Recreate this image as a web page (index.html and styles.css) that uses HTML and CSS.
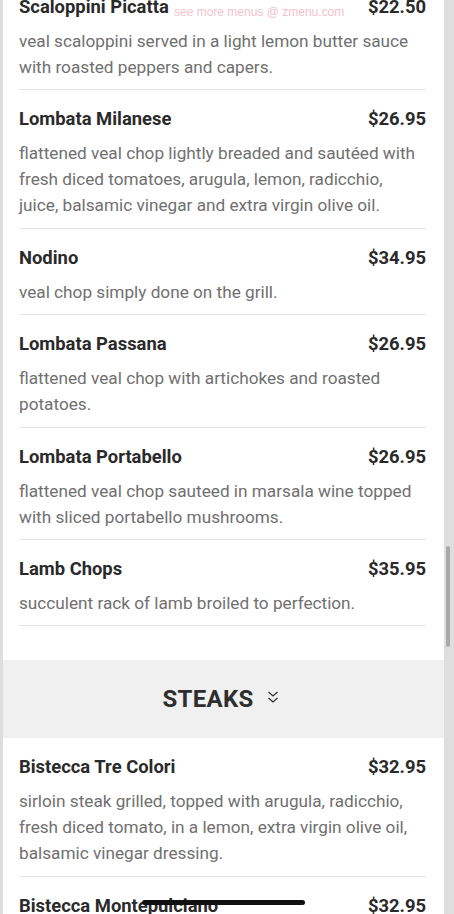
FILE: index.html
```html
<!DOCTYPE html>
<html lang="en">
<head>
  <meta charset="UTF-8" />
  <meta name="viewport" content="width=device-width, initial-scale=1.0" />
  <title>Menu - Veal &amp; Steaks</title>
  <link rel="stylesheet" href="styles.css">
</head>
<body>
  <div class="menu">
    <section class="items">
      <div class="item">
        <div class="item-head"><span>Scaloppini Picatta</span><span>$22.50</span></div>
        <p class="desc">veal scaloppini served in a light lemon butter sauce with roasted peppers and capers.</p>
      </div>
      <div class="item">
        <div class="item-head"><span>Lombata Milanese</span><span>$26.95</span></div>
        <p class="desc">flattened veal chop lightly breaded and sautéed with fresh diced tomatoes, arugula, lemon, radicchio, juice, balsamic vinegar and extra virgin olive oil.</p>
      </div>
      <div class="item">
        <div class="item-head"><span>Nodino</span><span>$34.95</span></div>
        <p class="desc">veal chop simply done on the grill.</p>
      </div>
      <div class="item">
        <div class="item-head"><span>Lombata Passana</span><span>$26.95</span></div>
        <p class="desc">flattened veal chop with artichokes and roasted potatoes.</p>
      </div>
      <div class="item">
        <div class="item-head"><span>Lombata Portabello</span><span>$26.95</span></div>
        <p class="desc">flattened veal chop sauteed in marsala wine topped with sliced portabello mushrooms.</p>
      </div>
      <div class="item">
        <div class="item-head"><span>Lamb Chops</span><span>$35.95</span></div>
        <p class="desc">succulent rack of lamb broiled to perfection.</p>
      </div>
    </section>

    <div class="category">
      <h2>STEAKS</h2>
      <svg class="chev" width="12" height="15" viewBox="0 0 12 15">
        <path d="M1.5 2 L6 6 L10.5 2 M1.5 8 L6 12 L10.5 8" fill="none" stroke="#333" stroke-width="1.3"/>
      </svg>
    </div>

    <section class="items">
      <div class="item">
        <div class="item-head"><span>Bistecca Tre Colori</span><span>$32.95</span></div>
        <p class="desc">sirloin steak grilled, topped with arugula, radicchio, fresh diced tomato, in a lemon, extra virgin olive oil, balsamic vinegar dressing.</p>
      </div>
      <div class="item">
        <div class="item-head"><span>Bistecca Montepulciano</span><span>$32.95</span></div>
        <p class="desc">grilled sirloin steak.</p>
      </div>
    </section>
  </div>

  <div class="watermark">see more menus @ zmenu.com</div>
  <div class="scrollbar"></div>
  <div class="home-bar"></div>
</body>
</html>
```

FILE: styles.css
```css
body {
  margin: 0;
  background: #dedede;
  font-family: Roboto, "Liberation Sans", sans-serif;
  overflow: hidden;
}
.menu {
  margin: -22px 0 0 3px;
  width: 441px;
  background: #fff;
}
.items {
  padding-bottom: 34px;
}
.item {
  margin: 0 18px 0 16px;
  padding: 18px 0 9.4px;
  border-bottom: 1px solid #e2e2e2;
}
.item-head {
  display: flex;
  justify-content: space-between;
  font-size: 18.4px;
  font-weight: bold;
  line-height: 22px;
  color: #2a2a2a;
}
.desc {
  margin: 10px 0 0;
  font-size: 17.2px;
  line-height: 26px;
  color: #707070;
}
.category {
  height: 78px;
  padding-right: 6px;
  background: #f0f0f0;
  display: flex;
  align-items: center;
  justify-content: center;
  gap: 13px;
}
.category h2 {
  margin: 0;
  font-size: 24px;
  font-weight: bold;
  color: #2e2e2e;
  letter-spacing: 0.3px;
}
.chev {
  margin-top: -3px;
}
.watermark {
  position: absolute;
  top: 5px;
  left: 174px;
  font-family: "Liberation Sans", Arial, sans-serif;
  font-size: 12px;
  color: #f3c3cc;
}
.scrollbar {
  position: fixed;
  top: 546px;
  left: 446px;
  width: 4px;
  height: 101px;
  border-radius: 2px;
  background: #a9a9a9;
}
.home-bar {
  position: fixed;
  top: 900px;
  left: 142px;
  width: 163px;
  height: 5px;
  border-radius: 3px;
  background: #111;
}
```
